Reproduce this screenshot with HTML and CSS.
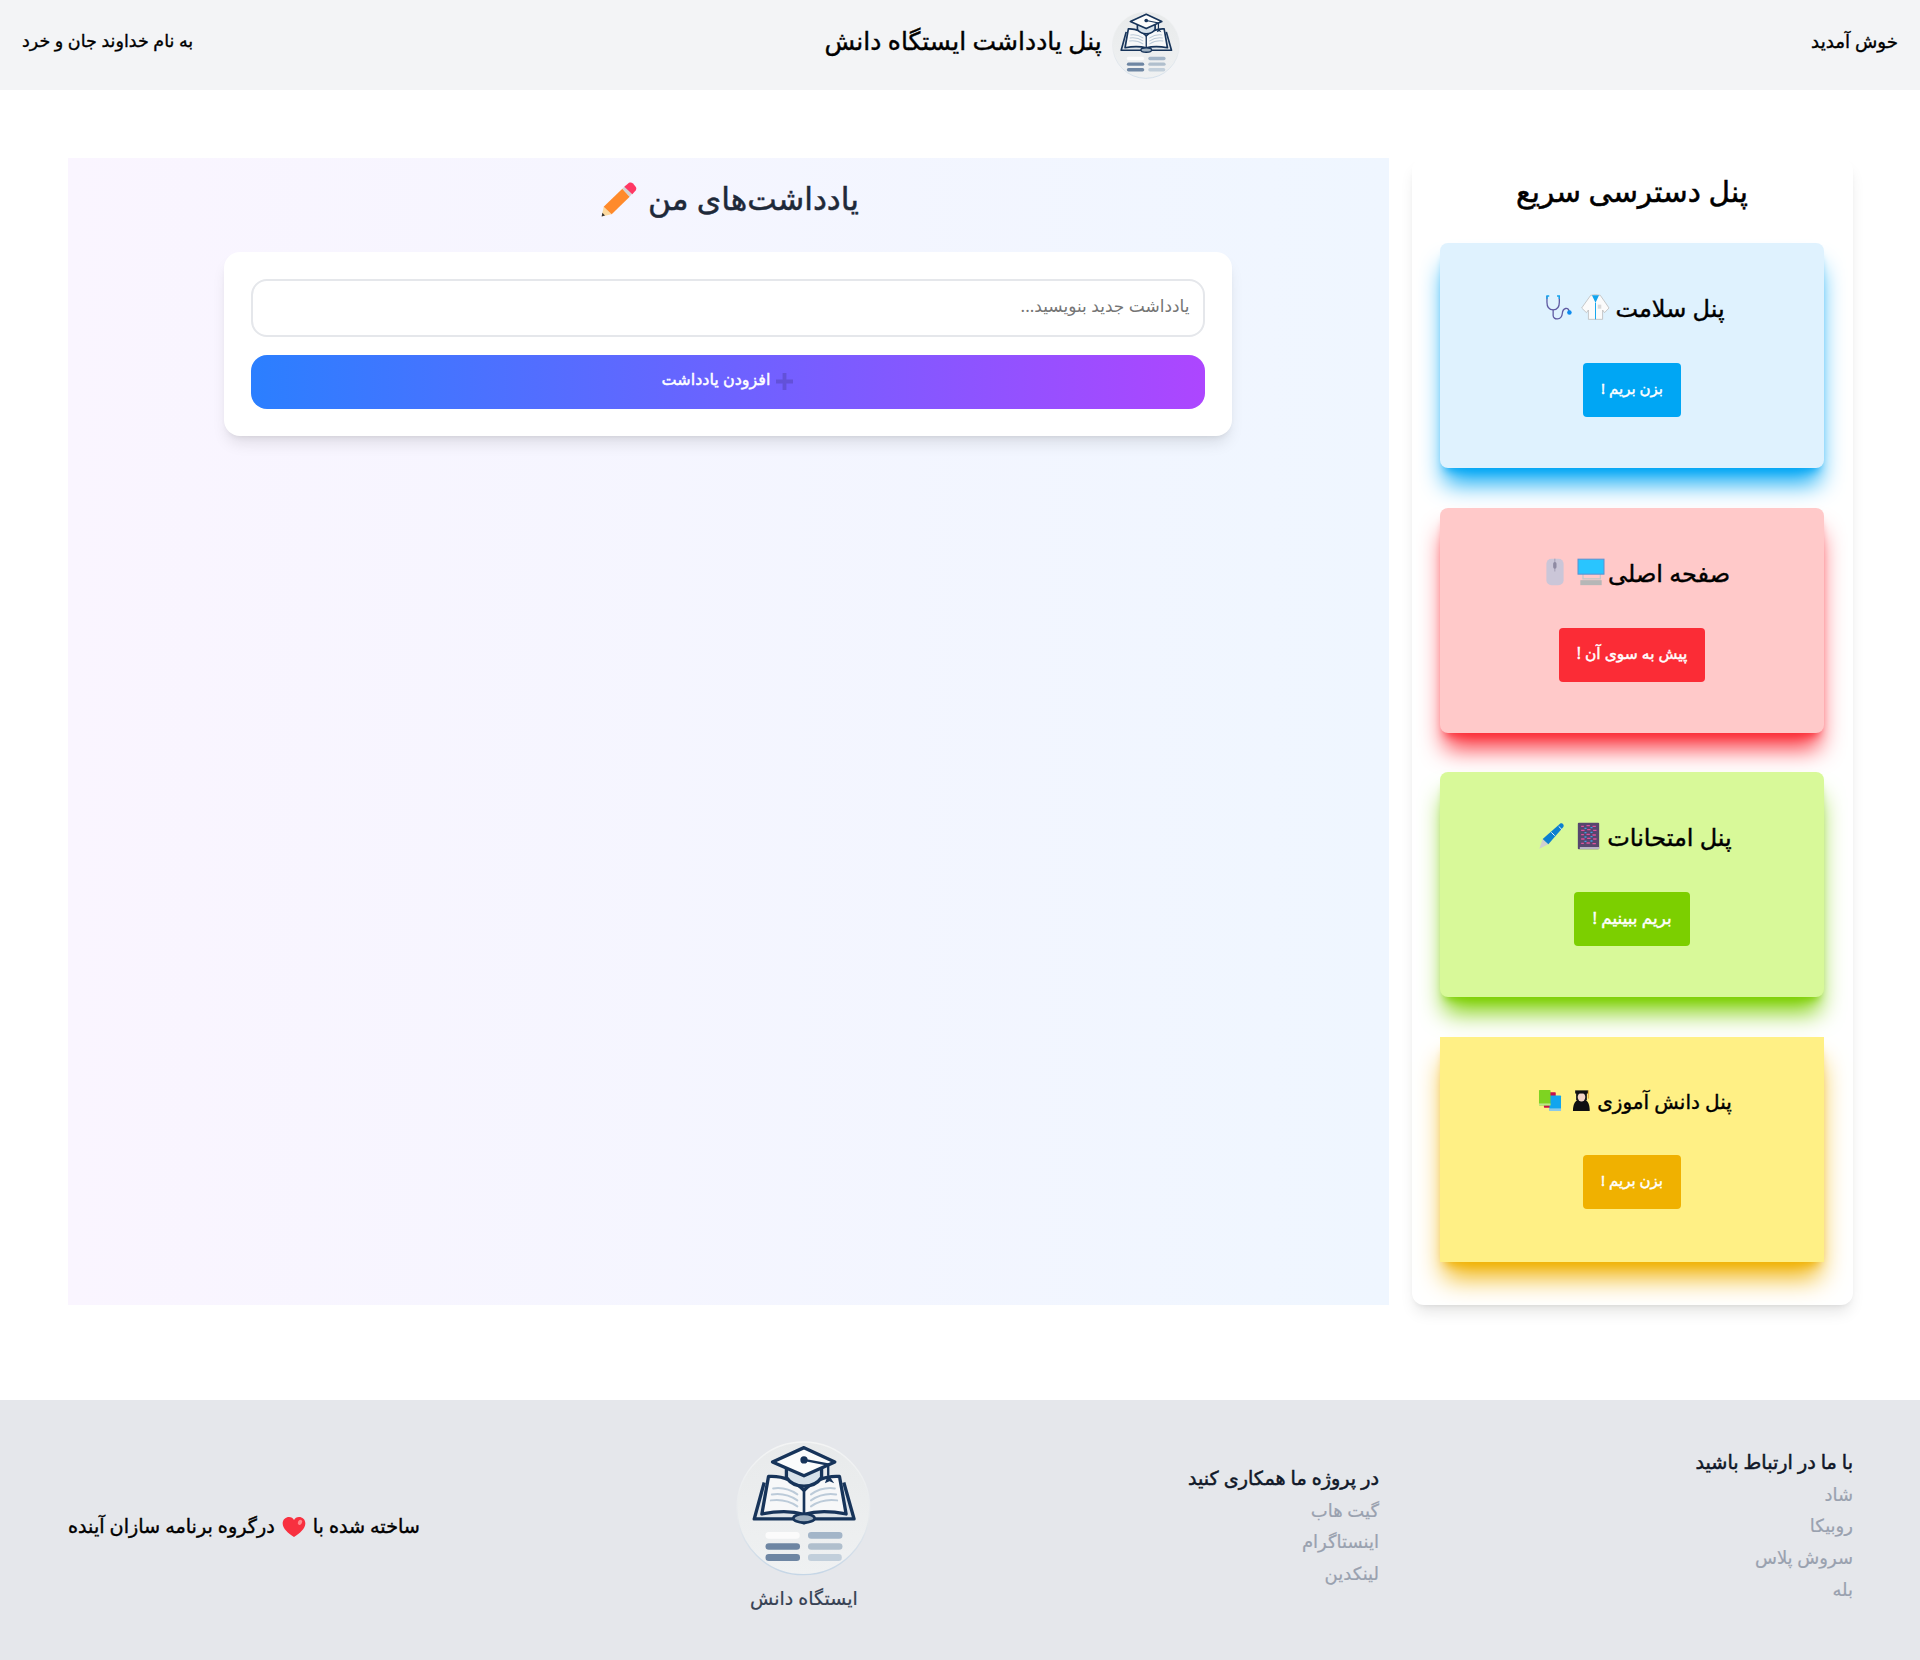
FILE: index.html
```html
<!DOCTYPE html>
<html lang="fa" dir="rtl">
<head>
<meta charset="utf-8">
<title>پنل یادداشت ایستگاه دانش</title>
<link rel="stylesheet" href="styles.css">
</head>
<body>
<svg class="defs" aria-hidden="true">
  <defs>
    <linearGradient id="disc" x1="0" y1="0" x2="0" y2="1"><stop offset="0" stop-color="#e8eaeb"/><stop offset="1" stop-color="#eff1f2"/></linearGradient>
    <linearGradient id="ring" x1="0" y1="0" x2="0" y2="1"><stop offset="0" stop-color="#f4f5f5"/><stop offset=".6" stop-color="#e6e9ec"/><stop offset="1" stop-color="#c5d6e6"/></linearGradient>
    <symbol id="logo" viewBox="80 65 407 407">
      <circle cx="283" cy="268" r="200" fill="url(#disc)" stroke="url(#ring)" stroke-width="4"/>
      <path d="M165 190 135 300H262L285 312 308 300H436L405 190" fill="#dfe5ea" stroke="#17345a" stroke-width="10" stroke-linejoin="round"/>
      <path d="M285 214C250 178 210 170 178 172L158 285C205 276 250 276 285 286 320 276 365 276 412 285L392 172C360 170 320 178 285 214Z" fill="#f7f8f9" stroke="#17345a" stroke-width="10" stroke-linejoin="round"/>
      <path d="M285 214V286" stroke="#17345a" stroke-width="8"/>
      <path d="M192 208C220 204 245 212 265 226M188 226C215 222 245 230 265 244M185 244C215 240 245 248 265 262M306 226C326 212 350 204 378 208M306 244C326 230 355 222 382 226M306 262C326 248 355 240 385 244" fill="none" stroke="#bccbd9" stroke-width="6" stroke-linecap="round"/>
      <ellipse cx="285" cy="298" rx="32" ry="13" fill="#9fb0c0" stroke="#17345a" stroke-width="8"/>
      <path d="M232 146V175C245 194 265 201 285 201 305 201 325 194 338 175V146Z" fill="#d6e1ea" stroke="#17345a" stroke-width="10" stroke-linejoin="round"/>
      <path d="M285 85 378 128 285 170 190 128Z" fill="#fbfcfc" stroke="#17345a" stroke-width="10" stroke-linejoin="round"/>
      <path d="M285 122 358 136V170" fill="none" stroke="#17345a" stroke-width="7"/>
      <circle cx="285" cy="122" r="11" fill="#17345a"/>
      <path d="M358 165 348 192 362 186 376 192Z" fill="#17345a"/>
      <rect x="169" y="339" width="103" height="21" rx="10" fill="#fbfbfb"/>
      <rect x="297" y="339" width="104" height="21" rx="10" fill="#a3b5c8"/>
      <rect x="169" y="373" width="104" height="20" rx="10" fill="#6e86a3"/>
      <rect x="297" y="373" width="104" height="20" rx="10" fill="#b0bfcd"/>
      <rect x="169" y="406" width="104" height="21" rx="10" fill="#6e86a3"/>
      <rect x="297" y="406" width="102" height="21" rx="10" fill="#c2cfdb"/>
    </symbol>
  </defs>
</svg>

<header class="topbar">
  <span class="topbar-text">خوش آمدید</span>
  <div class="brand">
    <svg class="brand-logo"><use href="#logo"/></svg>
    <h1 class="brand-title">پنل یادداشت ایستگاه دانش</h1>
  </div>
  <span class="topbar-text topbar-text-end">به نام خداوند جان و خرد</span>
</header>

<main class="layout">
  <aside class="quick">
    <h2 class="quick-title">پنل دسترسی سریع</h2>
    <section class="tile tile-sky">
      <h3 class="tile-title"><span class="tile-label">پنل سلامت</span>
        <svg class="ico ico-coat" viewBox="545 436 90 78" preserveAspectRatio="none"><path d="M575 440 590 438 605 440 632 478 618 492 612 484V512H568V484L562 492 547 478Z" fill="#fbfbfb" stroke="#bdbdbd" stroke-width="2.5" stroke-linejoin="round"/><path d="M579 440H601L590 462Z" fill="#12a5ee"/><path d="M590 462V512" stroke="#12a5ee" stroke-width="3"/><rect x="597" y="468" width="11" height="12" fill="#d9d9d9"/></svg>
        <svg class="ico ico-steth" viewBox="435 430 86 82" preserveAspectRatio="none"><path d="M441 436V455C441 475 452 478 460 478 468 478 479 475 479 455V436" fill="none" stroke="#5f5aa2" stroke-width="4"/><path d="M441 445V436H448M479 445V436H472" fill="none" stroke="#12a5ee" stroke-width="4"/><path d="M460 478V495C460 510 486 510 488 490 490 470 506 470 509 482" fill="none" stroke="#5f5aa2" stroke-width="4"/><circle cx="510" cy="486" r="7" fill="#0d8cf0"/></svg>
      </h3>
      <a class="go go-sky" href="#">بزن بریم !</a>
    </section>
    <section class="tile tile-red">
      <h3 class="tile-title tile-title-red"><span class="tile-label">صفحه اصلی</span>
        <svg class="ico ico-monitor" viewBox="230 50 84 83"><rect x="248" y="96" width="52" height="16" fill="none" stroke="#c5c8c8" stroke-width="4"/><rect x="233" y="53" width="78" height="45" fill="#29c5ff" stroke="#5f8fd0" stroke-width="3"/><rect x="240" y="116" width="64" height="15" fill="#b5b7b7"/></svg>
        <svg class="ico ico-mouse" viewBox="133 50 55 83"><rect x="135" y="52" width="51" height="79" rx="15" fill="#cbc6d8"/><path d="M160 52V90" stroke="#8f8aa3" stroke-width="2"/><rect x="155" y="62" width="10" height="20" rx="5" fill="#8f8aa3"/></svg>
      </h3>
      <a class="go go-red" href="#">پیش به سوی آن !</a>
    </section>
    <section class="tile tile-lime">
      <h3 class="tile-title"><span class="tile-label">پنل امتحانات</span>
        <svg class="ico ico-book" viewBox="230 61 68 84"><rect x="232" y="63" width="64" height="80" rx="3" fill="#57466f"/><rect x="238" y="136" width="58" height="6" fill="#b8b2c4"/><path d="M242 74H250M258 72H268M276 74H286M242 86H252M260 84H270M278 86H288M242 99H250M258 98H268M276 100H286M242 112H252M260 110H270M278 112H288M242 125H250M258 124H268M276 126H286" stroke="#e0529c" stroke-width="4"/><path d="M252 80H258M270 78H276M252 93H258M270 92H276M252 106H258M270 105H276M252 119H258M270 118H276" stroke="#3aa0e8" stroke-width="4"/></svg>
        <svg class="ico ico-pen" viewBox="110 61 84 84"><path d="M114 141 124 112 141 128Z" fill="#cfcfcf"/><path d="M124 112 176 66C182 62 190 70 186 76L141 128Z" fill="#0b7fd0"/><path d="M150 92 160 102M172 74 182 84" stroke="#e8f4ff" stroke-width="3"/></svg>
      </h3>
      <a class="go go-lime" href="#">بریم ببینیم !</a>
    </section>
    <section class="tile tile-yellow">
      <h3 class="tile-title tile-title-sm"><span class="tile-label">پنل دانش آموزی</span>
        <svg class="ico ico-grad" viewBox="511 172 60 72"><path d="M514 241C514 222 520 210 530 206H552C562 210 567 222 567 241Z" fill="#0f0f12"/><path d="M524 184H558V205C552 214 530 214 524 205Z" fill="#16161a"/><ellipse cx="541" cy="197" rx="12" ry="14" fill="#f3d4c8"/><path d="M521 176H562V186H521Z" fill="#0f0f12"/><path d="M563 176V202" stroke="#e3b341" stroke-width="4"/></svg>
        <svg class="ico ico-books" viewBox="412 176 73 68"><rect x="430" y="185" width="36" height="47" rx="2" fill="#c7104a"/><rect x="447" y="195" width="35" height="47" rx="2" fill="#12a5ee"/><rect x="447" y="234" width="35" height="8" fill="#8cc9e8"/><rect x="415" y="178" width="35" height="47" rx="2" fill="#7ed321"/><rect x="415" y="219" width="35" height="6" fill="#bde58a"/></svg>
      </h3>
      <a class="go go-yellow" href="#">بزن بریم !</a>
    </section>
  </aside>

  <section class="notes">
    <h2 class="notes-title"><span class="notes-label">یادداشت‌های من</span>
      <svg class="ico-pencil" viewBox="126 60 108 107"><path d="M128 163 134 134 158 156Z" fill="#fbd9a0"/><path d="M128 163 130 152 138 160Z" fill="#333"/><path d="M134 134 190 80 212 104 158 156Z" fill="#ff8a2b"/><path d="M190 80 200 70 222 92 212 104Z" fill="#d3d3d3"/><path d="M196 74 210 62C214 60 218 60 222 64L230 74C233 78 232 82 230 85L220 96Z" fill="#ff3864"/></svg>
    </h2>
    <form class="note-form">
      <input class="note-input" type="text" placeholder="یادداشت جدید بنویسید...">
      <button class="note-add" type="button"><svg class="plus" viewBox="0 0 18 18"><path d="M7 0H11V7H18V11H11V18H7V11H0V7H7Z"/></svg><span class="note-add-label">افزودن یادداشت</span></button>
    </form>
  </section>
</main>

<footer class="foot">
  <div class="foot-col">
    <h4 class="foot-head">با ما در ارتباط باشید</h4>
    <a class="foot-link" href="#">شاد</a>
    <a class="foot-link" href="#">روبیکا</a>
    <a class="foot-link" href="#">سروش پلاس</a>
    <a class="foot-link" href="#">بله</a>
  </div>
  <div class="foot-col">
    <h4 class="foot-head">در پروژه ما همکاری کنید</h4>
    <a class="foot-link" href="#">گیت هاب</a>
    <a class="foot-link" href="#">اینستاگرام</a>
    <a class="foot-link" href="#">لینکدین</a>
  </div>
  <div class="foot-brand">
    <svg class="foot-logo"><use href="#logo"/></svg>
    <span class="foot-name">ایستگاه دانش</span>
  </div>
  <p class="foot-made">ساخته شده با
    <svg class="ico-heart" viewBox="718 72 72 66"><path d="M754 135C735 122 720 110 720 94 720 82 730 75 739 75 746 75 751 79 754 84 757 79 762 75 769 75 779 75 788 82 788 94 788 110 773 122 754 135Z" fill="#f8303f"/><ellipse cx="772" cy="91" rx="6" ry="8" fill="#ff8a8f" transform="rotate(30 772 91)"/></svg>
    درگروه برنامه سازان آینده</p>
</footer>
</body>
</html>
```
FILE: styles.css
```css
* { box-sizing: border-box; }
html, body { margin: 0; padding: 0; }
body {
  width: 1920px;
  min-height: 1660px;
  background: #fff;
  color: #000;
  font-family: "Noto Sans", "DejaVu Sans", sans-serif;
}
h1, h2, h3, h4, p { margin: 0; font-weight: 400; }
a { text-decoration: none; color: inherit; }
.defs { width: 0; height: 0; display: block; overflow: hidden; }

.topbar {
  height: 90px;
  padding: 0 22px;
  background: #f3f4f6;
  display: flex;
  align-items: center;
  justify-content: space-between;
}
.topbar-text { font-size: 18.3px; padding-bottom: 10px; -webkit-text-stroke: .35px currentColor; }
.topbar-text-end { font-size: 17.5px; }
.brand { display: flex; align-items: center; gap: 10px; }
.brand-logo { width: 68px; height: 68px; display: block; }
.brand-title { font-size: 25px; padding-bottom: 10px; -webkit-text-stroke: .4px currentColor; }

.layout {
  display: flex;
  gap: 23px;
  padding: 68px 67px 95px 68px;
  align-items: stretch;
}
.quick {
  width: 441px;
  flex: none;
  padding: 15px 29px 43.5px 28px;
  background: #fff;
  border-radius: 12px;
  box-shadow: 0 10px 15px -3px rgba(0,0,0,.1), 0 4px 6px -4px rgba(0,0,0,.1);
  display: flex;
  flex-direction: column;
  gap: 39.5px;
}
.quick-title { font-size: 29.5px; line-height: 36px; text-align: center; margin-bottom: -5.5px; -webkit-text-stroke: .5px currentColor; }
.tile {
  height: 225px;
  padding: 46px 0 0;
  border-radius: 8px;
  display: flex;
  flex-direction: column;
  align-items: center;
}
.tile-title {
  font-size: 24px;
  line-height: 36px;
  height: 38px;
  margin-bottom: 36px;
  padding-left: 6px;
  display: flex;
  align-items: center;
  gap: 8px;
  white-space: nowrap;
  -webkit-text-stroke: .4px currentColor;
}
.tile-title-red { padding-left: 11px; }
.tile-title-sm { font-size: 20px; gap: 6px; margin-bottom: 34px; }
.tile-label { margin-left: -3px; }
.ico { display: block; flex: none; margin-top: -2px; }
.ico-coat { width: 29px; height: 26px; }
.ico-steth { width: 28px; height: 27px; }
.ico-monitor { width: 28px; height: 28px; margin-right: -2px; }
.ico-mouse { width: 20px; height: 28px; margin-right: 4px; }
.ico-book { width: 23px; height: 28px; margin-right: 2px; }
.ico-pen { width: 28px; height: 28px; margin-right: 3px; }
.ico-grad { width: 19px; height: 23px; margin-right: 3px; }
.ico-books { width: 24px; height: 23px; margin-right: 4px; }
.tile-sky { background: #dff2fe; box-shadow: 0 20px 25px -5px #00a6f4, 0 8px 10px -6px #00a6f4; }
.tile-red { background: #ffc9c9; box-shadow: 0 20px 25px -5px #fb2c36, 0 8px 10px -6px #fb2c36; }
.tile-lime { background: #d8f999; box-shadow: 0 20px 25px -5px #7ccf00, 0 8px 10px -6px #7ccf00; }
.tile-yellow { background: #fff085; border-radius: 0; box-shadow: 0 20px 25px -5px #f0b100, 0 8px 10px -6px #f0b100; }
.go {
  height: 54px;
  padding: 0 18px 4px;
  border-radius: 4px;
  color: #fff;
  font-size: 15px;
  -webkit-text-stroke: .45px currentColor;
  display: flex;
  align-items: center;
}
.go-sky { background: #00a6f4; }
.go-red { background: #fb2c36; font-size: 15.5px; }
.go-lime { background: #7ccf00; font-size: 16.8px; }
.go-yellow { background: #f0b100; }

.notes {
  flex: 1;
  padding-top: 22px;
  background: linear-gradient(to right, #faf5ff, #eff6ff);
  display: flex;
  flex-direction: column;
  align-items: center;
}
.notes-title {
  font-size: 31.3px;
  line-height: 36px;
  color: #1e2939;
  display: flex;
  align-items: center;
  gap: 11px;
  margin-bottom: 32px;
  margin-left: 3px;
  -webkit-text-stroke: .5px currentColor;
}
.notes-label { padding-bottom: 4px; }
.ico-pencil { width: 36px; height: 36px; display: block; }
.note-form {
  width: 1008px;
  margin-right: 2px;
  padding: 27px;
  background: #fff;
  border-radius: 16px;
  box-shadow: 0 10px 15px -3px rgba(0,0,0,.1), 0 4px 6px -4px rgba(0,0,0,.1);
  display: flex;
  flex-direction: column;
  gap: 18px;
}
.note-input {
  height: 58px;
  padding: 0 13px 6px;
  border: 2px solid #e5e7eb;
  border-radius: 16px;
  font: inherit;
  font-size: 17px;
  background: #fff;
}
.note-input::placeholder { color: #757575; }
.note-add {
  height: 54px;
  border: 0;
  border-radius: 16px;
  background: linear-gradient(to right, #2b7fff, #ad46ff);
  color: #fff;
  font: inherit;
  font-size: 16px;
  display: flex;
  align-items: center;
  justify-content: center;
  gap: 6px;
}
.note-add-label { padding-bottom: 6px; -webkit-text-stroke: .45px currentColor; }
.plus { width: 17px; height: 17px; display: block; margin-bottom: 2px; fill: rgba(60,50,130,.3); }

.foot {
  height: 260px;
  padding: 0 67px 0 68px;
  background: #e5e7eb;
  display: flex;
  align-items: center;
  justify-content: space-between;
}
.foot-col { display: flex; flex-direction: column; align-items: flex-start; padding-bottom: 7px; }
.foot-head { font-size: 19.2px; line-height: 28px; padding-bottom: 3px; color: #101828; -webkit-text-stroke: .5px currentColor; }
.foot-link { font-size: 18px; line-height: 31.6px; color: #99a1af; -webkit-text-stroke: .2px currentColor; }
.foot-brand { display: flex; flex-direction: column; align-items: center; gap: 8px; padding-bottom: 8px; }
.foot-logo { width: 135px; height: 135px; display: block; }
.foot-name { font-size: 19px; line-height: 28px; color: #364153; -webkit-text-stroke: .2px currentColor; }
.foot-made { font-size: 19.2px; padding-bottom: 10px; display: flex; align-items: center; gap: 7px; -webkit-text-stroke: .4px currentColor; }
.ico-heart { width: 24px; height: 22px; display: block; margin-top: 4px; }
```
